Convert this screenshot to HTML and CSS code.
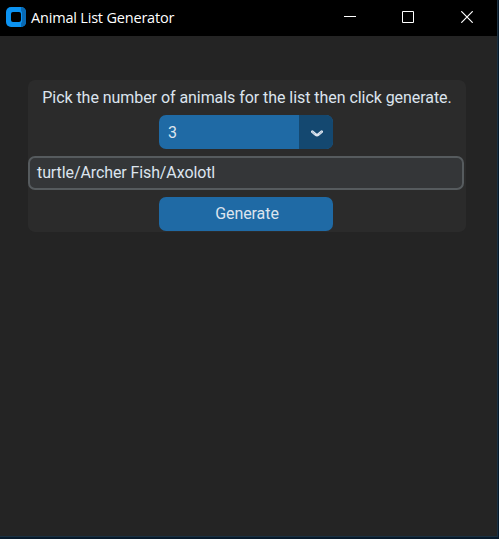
FILE: index.html
```html
<!DOCTYPE html>
<html lang="en">
<head>
<meta charset="utf-8">
<title>Animal List Generator</title>
<link rel="stylesheet" href="styles.css">
</head>
<body>
<div class="window">
  <header class="titlebar">
    <svg class="logo" width="20" height="20" viewBox="0 0 20 20">
      <rect width="20" height="20" rx="5" fill="#0c93f2"/>
      <path d="M15 0a5 5 0 0 1 5 5v10a5 5 0 0 1-5 5V16l1-1V5l-1-1z" fill="#0869b4"/>
      <rect x="5" y="5" width="10" height="10" rx="2" fill="#000"/>
    </svg>
    <h1 class="title">Animal List Generator</h1>
    <div class="controls">
      <svg width="12" height="12" viewBox="0 0 12 12"><path d="M0 5.5h12" stroke="#fff"/></svg>
      <svg width="12" height="12" viewBox="0 0 12 12"><path d="M.5.5h11v11H.5z" fill="none" stroke="#fff"/></svg>
      <svg class="close" width="12" height="12" viewBox="0 0 12 12"><path d="M.3.3l11.4 11.4M11.7.3L.3 11.7" stroke="#fff" stroke-width="1.2"/></svg>
    </div>
  </header>
  <main class="content">
    <section class="panel">
      <p class="label">Pick the number of animals for the list then click generate.</p>
      <div class="select">
        <span class="value">3</span>
        <span class="arrow">
          <svg width="12" height="7" viewBox="0 0 12 7"><path d="M1.4 1.7L4.6 4.5Q6 5.6 7.4 4.5L10.6 1.7" fill="none" stroke="#dce4ee" stroke-width="2.8" stroke-linecap="round"/><path d="M1.4 1.9L3.6 3.8M10.6 1.9L8.4 3.8" stroke="#7495b2" stroke-width=".6" stroke-linecap="round"/></svg>
        </span>
      </div>
      <div class="entry">turtle/Archer Fish/Axolotl</div>
      <button class="button">Generate</button>
    </section>
  </main>
</div>
</body>
</html>
```
FILE: styles.css
```css
* { box-sizing: border-box; }
body {
  margin: 0;
  background: #071a2b;
  font: 16px/20px Roboto, sans-serif;
  color: #dce4ee;
}
.window {
  width: 498px;
  height: 537px;
  display: flex;
  flex-direction: column;
  border-right: 1px solid #1b3040;
  border-bottom: 1px solid #1b3040;
  background: #242424;
}
.titlebar {
  height: 36px;
  flex: none;
  display: flex;
  align-items: center;
  padding: 0 24px 2px 6px;
  background: #000;
}
.title {
  margin: 0 0 0 5px;
  padding-top: 2px;
  font: 14.5px/20px "Open Sans", sans-serif;
  letter-spacing: -0.19px;
  color: #fff;
}
.controls {
  display: flex;
  gap: 46px;
  margin-left: auto;
}
.close { margin-left: 1px; }
.content { padding: 44px 31px 0 28px; }
.panel {
  height: 152px;
  display: flex;
  flex-direction: column;
  align-items: center;
  padding-right: 2px;
  border-radius: 7px;
  background: #2b2b2b;
}
.label {
  margin: 0;
  padding: 8px 0 7px 2px;
  letter-spacing: -0.055px;
  white-space: nowrap;
}
.select {
  width: 174px;
  height: 34px;
  display: flex;
  overflow: hidden;
  border-radius: 7px;
  background: #1f6aa5;
}
.value { flex: 1; padding: 8px 9px 6px; }
.arrow {
  width: 34px;
  display: flex;
  align-items: center;
  justify-content: center;
  padding: 2px 0 0 2px;
  background: #144870;
}
.entry {
  width: 436px;
  height: 34px;
  flex: none;
  margin: 7px 0;
  padding: 5px 7px;
  border: 2px solid #565b5e;
  border-radius: 7px;
  background: #343638;
  letter-spacing: -0.1px;
}
.button {
  width: 174px;
  height: 34px;
  flex: none;
  padding: 0 0 1px 2px;
  border: 0;
  border-radius: 7px;
  background: #1f6aa5;
  color: #dce4ee;
  font: inherit;
  letter-spacing: -0.08px;
}
```
